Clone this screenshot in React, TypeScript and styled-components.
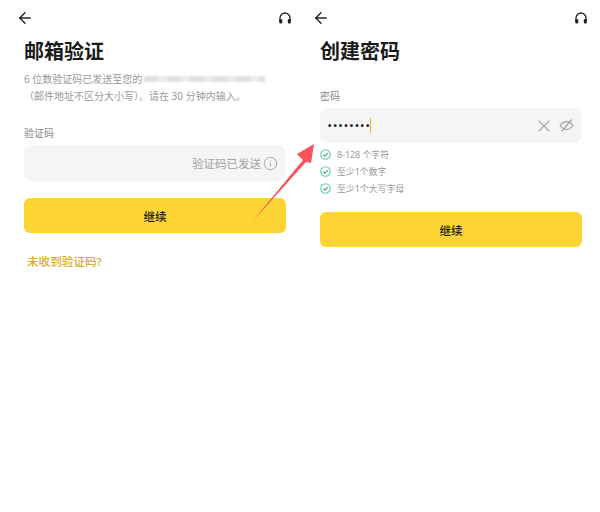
import styled, { createGlobalStyle } from 'styled-components';
import { ArrowLeft, Info, X } from 'lucide-react';

const GlobalStyle = createGlobalStyle`
  html, body {
    margin: 0;
    padding: 0;
    background: #fff;
    font-family: "Noto Sans", "Noto Sans CJK SC", sans-serif;
  }
  * {
    box-sizing: border-box;
  }
`;

const rules = ['8-128 个字符', '至少1个数字', '至少1个大写字母'];

const HeadsetIcon = () => (
  <svg width="14" height="14" viewBox="0 0 14 14" fill="none">
    <path d="M2 10V7a5 5 0 0 1 10 0v3" stroke="#222" strokeWidth="1.3" />
    <rect x="1.2" y="8" width="3" height="4.4" rx="1.2" fill="#222" />
    <rect x="9.8" y="8" width="3" height="4.4" rx="1.2" fill="#222" />
  </svg>
);

const CheckIcon = () => (
  <svg width="11" height="11" viewBox="0 0 11 11" fill="none">
    <circle cx="5.5" cy="5.5" r="4.7" stroke="#5fcba6" strokeWidth="1.1" />
    <path d="M3.2 5.6l1.7 1.6 2.9-3" stroke="#4d9c82" strokeWidth="1.1" />
  </svg>
);

const EyeOffIcon = () => (
  <svg width="15" height="15" viewBox="0 0 15 15" fill="none" stroke="#a3a3a3" strokeWidth="1.2">
    <path d="M1 7.5C3 4.8 5 3.6 7.5 3.6s4.5 1.2 6.5 3.9c-2 2.7-4 3.9-6.5 3.9S3 10.2 1 7.5z" />
    <path d="M12.6 1.5L2.6 13.5" />
  </svg>
);

const App = () => {
  return (
    <Screen>
      <GlobalStyle />
      <Panel>
        <Header>
          <ArrowLeft size={18} color="#222" strokeWidth={1.8} />
          <HeadsetIcon />
        </Header>
        <Title>邮箱验证</Title>
        <Description>
          <DescriptionLine>
            6 位数验证码已发送至您的<BlurredEmail />
          </DescriptionLine>
          <DescriptionLine>（邮件地址不区分大小写）。请在 30 分钟内输入。</DescriptionLine>
        </Description>
        <CodeLabel>验证码</CodeLabel>
        <InputBox $height={36}>
          <SentHint>验证码已发送</SentHint>
          <Info size={15} color="#9a9a9a" strokeWidth={1.4} />
        </InputBox>
        <ContinueButton $top={17}>继续</ContinueButton>
        <ResendLink>未收到验证码?</ResendLink>
      </Panel>

      <Panel>
        <Header>
          <ArrowLeft size={18} color="#222" strokeWidth={1.8} />
          <HeadsetIcon />
        </Header>
        <Title>创建密码</Title>
        <PasswordLabel>密码</PasswordLabel>
        <InputBox $height={35}>
          <Dots>••••••••</Dots>
          <Caret />
          <InputActions>
            <X size={20} color="#a3a3a3" strokeWidth={1.3} />
            <EyeOffIcon />
          </InputActions>
        </InputBox>
        <RuleList>
          {rules.map((rule) => (
            <Rule key={rule}>
              <CheckIcon />
              <span>{rule}</span>
            </Rule>
          ))}
        </RuleList>
        <ContinueButton $top={18}>继续</ContinueButton>
      </Panel>

      <RedArrow width="90" height="100" viewBox="0 0 90 100">
        <polygon points="12,92 63,30 57,24 74,14 71,33 66,32" fill="#f8545a" />
      </RedArrow>
    </Screen>
  );
};

const Screen = styled.div`
  position: relative;
  display: flex;
  width: 600px;
  height: 512px;
  overflow: hidden;
  background: #fff;
`;
const Panel = styled.div`
  width: 296px;
  padding: 0 0 0 24px;
  flex-shrink: 0;
`;
const Header = styled.div`
  display: flex;
  align-items: center;
  justify-content: space-between;
  width: 276px;
  height: 14px;
  margin: 11px 0 0 -8px;
`;
const Title = styled.h1`
  margin: 16px 0 0;
  font-size: 20px;
  line-height: 22px;
  font-weight: 700;
  color: #1b1b1b;
`;
const Description = styled.div`
  margin-top: 7px;
  width: 262px;
`;
const DescriptionLine = styled.div`
  display: flex;
  align-items: center;
  height: 17px;
  font-size: 10px;
  color: #999;
  white-space: nowrap;
`;
const BlurredEmail = styled.span`
  display: inline-block;
  width: 121px;
  height: 6px;
  margin-left: 2px;
  background: repeating-linear-gradient(90deg, #e0e0e3 0 14px, #ececef 14px 23px);
  filter: blur(1px);
`;
const CodeLabel = styled.div`
  margin-top: 22px;
  font-size: 10px;
  line-height: 14px;
  color: #8a8a8a;
`;
const PasswordLabel = styled.div`
  margin-top: 26px;
  font-size: 10px;
  line-height: 14px;
  color: #8a8a8a;
`;
const InputBox = styled.div<{ $height: number }>`
  display: flex;
  align-items: center;
  justify-content: flex-end;
  width: 262px;
  height: ${(p) => p.$height}px;
  margin-top: 5px;
  padding: 0 8px;
  border-radius: 8px;
  background: #f5f5f5;
`;
const SentHint = styled.span`
  margin-right: 2px;
  font-size: 11.5px;
  color: #a3a3a3;
`;
const Dots = styled.span`
  margin-right: -1px;
  font-size: 9px;
  letter-spacing: 2.05px;
  font-weight: 700;
  color: #111;
`;
const Caret = styled.span`
  width: 1px;
  height: 15px;
  background: #eeb320;
`;
const InputActions = styled.div`
  display: flex;
  align-items: center;
  gap: 5px;
  margin-left: auto;
`;
const RuleList = styled.ul`
  display: flex;
  flex-direction: column;
  gap: 6px;
  margin: 6px 0 0;
  padding: 0;
  list-style: none;
`;
const Rule = styled.li`
  display: flex;
  align-items: center;
  gap: 6px;
  height: 11px;
  font-size: 8.9px;
  color: #999;
`;
const ContinueButton = styled.button<{ $top: number }>`
  display: block;
  width: 262px;
  height: 35px;
  margin-top: ${(p) => p.$top}px;
  padding: 0;
  border: none;
  border-radius: 6px;
  background: #fcd535;
  font-family: inherit;
  font-size: 11.5px;
  font-weight: 500;
  color: #1b1b1b;
`;
const ResendLink = styled.div`
  margin: 20px 0 0 3px;
  font-size: 11.6px;
  line-height: 18px;
  font-weight: 500;
  color: #d9ad1e;
`;
const RedArrow = styled.svg`
  position: absolute;
  left: 240px;
  top: 130px;
`;

export default App;
